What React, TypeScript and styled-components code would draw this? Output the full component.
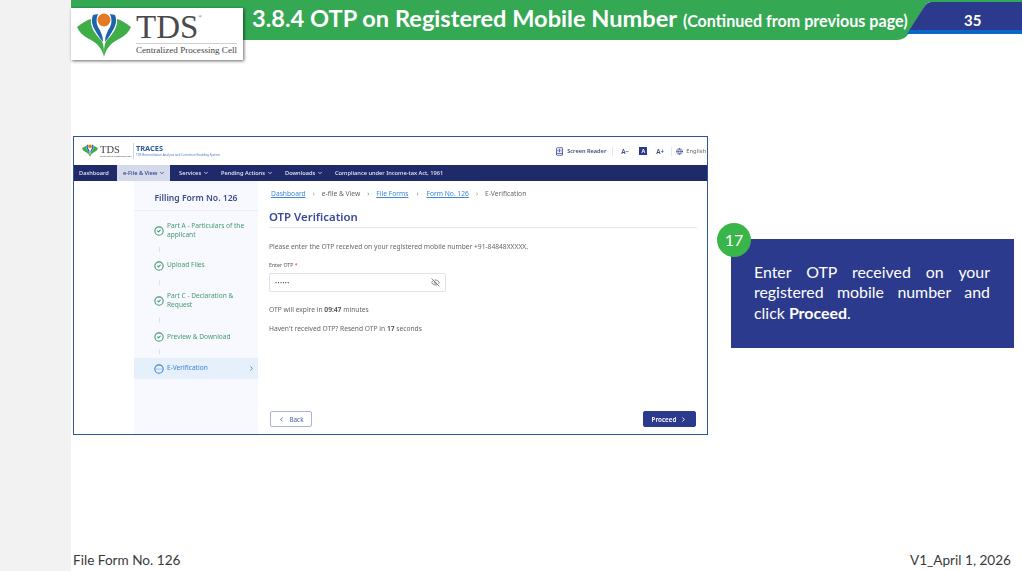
import styled, { createGlobalStyle } from 'styled-components';
import {
  BookAudio,
  ChevronDown,
  ChevronLeft,
  ChevronRight,
  CircleCheck,
  CircleEllipsis,
  EyeOff,
  Globe,
} from 'lucide-react';

const GlobalStyle = createGlobalStyle`
  * { box-sizing: border-box; }
  html, body { margin: 0; padding: 0; background: #fff; }
`;

const Page = styled.div`
  display: flex;
  width: 1022px;
  height: 571px;
  overflow: hidden;
  font-family: Lato, 'Liberation Sans', sans-serif;
`;

const Gutter = styled.div`
  width: 71px;
  flex: none;
  background: #f2f2f2;
`;

const Slide = styled.main`
  flex: 1;
  display: flex;
  flex-direction: column;
  min-width: 0;
`;

const Header = styled.header`
  position: relative;
  height: 40px;
  flex: none;
`;

const TitleBand = styled.div`
  display: flex;
  align-items: baseline;
  gap: 6px;
  height: 40px;
  padding: 3px 0 0 181px;
  background: #34a853;
  color: #fff;
  clip-path: path('M0 0 H951 V2 H860 Q856 2 853 7 L838 33 Q834 40 826 40 H0 Z');
`;

const TitleMain = styled.h1`
  margin: 0;
  font-size: 23.6px;
  font-weight: 700;
  line-height: 30px;
  white-space: nowrap;
`;

const TitleNote = styled.span`
  font-size: 16.1px;
  font-weight: 700;
  white-space: nowrap;
`;

const PageTab = styled.div`
  position: absolute;
  top: 2px;
  right: 0;
  width: 115px;
  height: 32px;
  display: flex;
  align-items: center;
  padding: 4px 0 0 57px;
  background: linear-gradient(#2b3a8c 0 28px, #0b66c8 28px);
  color: #fff;
  font-size: 15px;
  font-weight: 700;
  clip-path: path('M0 32 L17 5 Q20 0 25 0 H115 V32 Z');
`;

const LogoCard = styled.div`
  position: absolute;
  top: 8px;
  left: 0;
  width: 172px;
  height: 52px;
  display: flex;
  background: #fff;
  box-shadow: 1px 1px 3px rgba(0, 0, 0, 0.6);
  padding: 2px 0 0 6px;
`;

const LogoText = styled.div`
  display: flex;
  flex-direction: column;
  margin-left: 5px;
  font-family: 'Liberation Serif', serif;
  color: #444;
`;

const LogoName = styled.div`
  font-size: 33px;
  line-height: 35px;
  height: 33px;
  color: #4a4a4a;
`;

const LogoReg = styled.sup`
  font-size: 5px;
  vertical-align: top;
  line-height: 14px;
`;

const LogoCaption = styled.div`
  border-top: 1px solid #d0d0d0;
  font-size: 9.1px;
  line-height: 13px;
  white-space: nowrap;
`;

const Content = styled.div`
  display: flex;
  align-items: flex-start;
  gap: 23px;
  margin: 96px 0 0 2px;
`;

const ShotFrame = styled.section`
  width: 635px;
  height: 299px;
  flex: none;
  display: flex;
  flex-direction: column;
  border: 1px solid #2f5597;
  background: #fff;
  overflow: hidden;
  font-family: 'Noto Sans', sans-serif;
  color: #666;
  filter: blur(0.3px);
`;

const ShotTop = styled.div`
  height: 28px;
  flex: none;
  display: flex;
  align-items: center;
  padding-left: 8px;
`;

const SmallBrand = styled.div`
  display: flex;
  align-items: center;
  gap: 2px;
  width: 51px;
  height: 16px;
  flex: none;
`;

const SmallBrandText = styled.div`
  font-family: 'Liberation Serif', serif;
  color: #444;
  font-size: 10.5px;
  line-height: 9px;
`;

const SmallBrandCaption = styled.div`
  font-size: 2.5px;
  line-height: 4px;
  color: #444;
  white-space: nowrap;
`;

const Traces = styled.div`
  border-left: 1px solid #cfd6e6;
  height: 16px;
  padding-left: 2px;
  display: flex;
  flex-direction: column;
`;

const TracesName = styled.div`
  font-size: 7.4px;
  line-height: 10px;
  font-weight: 700;
  color: #2c5aa6;
`;

const TracesSub = styled.div`
  font-size: 3px;
  line-height: 5px;
  color: #4a78c0;
  white-space: nowrap;
`;

const Tools = styled.div`
  margin-left: auto;
  display: flex;
  align-items: center;
  font-size: 5.6px;
  font-weight: 600;
  color: #3c4a78;
`;

const ToolText = styled.span<{ $gap?: number }>`
  margin-left: ${(p) => p.$gap ?? 0}px;
  white-space: nowrap;
`;

const SizeText = styled(ToolText)`
  font-size: 6.4px;
`;

const ToolSep = styled.span<{ $gap: number }>`
  width: 1px;
  height: 9px;
  background: #e3e6ee;
  margin-left: ${(p) => p.$gap}px;
`;

const SizeBox = styled.span`
  width: 8px;
  height: 8px;
  margin-left: 10px;
  background: #2b3a8c;
  color: #fff;
  display: flex;
  align-items: center;
  justify-content: center;
`;

const Lang = styled.span`
  margin: 0 1px 0 3px;
  font-size: 5.8px;
  color: #666;
  font-weight: 400;
`;

const Nav = styled.nav`
  height: 16px;
  flex: none;
  display: flex;
  align-items: center;
  background: #1f2a6b;
  color: #e8ebf6;
  font-size: 5.7px;
  font-weight: 500;
`;

const NavItem = styled.div<{ $active?: boolean; $width: number }>`
  width: ${(p) => p.$width}px;
  height: 16px;
  flex: none;
  display: flex;
  align-items: center;
  gap: 2px;
  padding-left: ${(p) => (p.$active ? 6 : 5)}px;
  white-space: nowrap;
  background: ${(p) => (p.$active ? '#d5daeb' : 'transparent')};
  color: ${(p) => (p.$active ? '#2b3a8c' : 'inherit')};
`;

const NavGap = styled.div<{ $width: number }>`
  width: ${(p) => p.$width}px;
  flex: none;
`;

const ShotBody = styled.div`
  flex: 1;
  display: flex;
  min-height: 0;
  padding-left: 60px;
`;

const Sidebar = styled.aside`
  width: 124px;
  flex: none;
  background: #f7f9fe;
  display: flex;
  flex-direction: column;
`;

const SideTitle = styled.div`
  height: 30px;
  flex: none;
  padding-top: 4px;
  display: flex;
  align-items: center;
  justify-content: center;
  border-bottom: 1px solid #eceef4;
  color: #3f4c8a;
  font-size: 8.6px;
  font-weight: 600;
`;

const Steps = styled.div`
  display: flex;
  flex-direction: column;
  padding-top: 11px;
`;

const Step = styled.div<{ $height: number; $current?: boolean }>`
  height: ${(p) => p.$height}px;
  display: flex;
  align-items: center;
  gap: 3px;
  padding: 0 3px 0 20px;
  font-size: 6.6px;
  line-height: 8.6px;
  color: ${(p) => (p.$current ? '#3b82d6' : '#43996e')};
  background: ${(p) => (p.$current ? '#e5f0fb' : 'transparent')};

  & > svg {
    flex: none;
  }
`;

const StepLabel = styled.span`
  flex: 1;
`;

const Link = styled.div<{ $height: number }>`
  height: ${(p) => p.$height}px;
  padding-left: 25px;
  display: flex;
  align-items: center;

  &::before {
    content: '';
    width: 1px;
    height: 5px;
    background: #dde0e8;
  }
`;

const Main = styled.div`
  flex: 1;
  min-width: 0;
  display: flex;
  flex-direction: column;
  padding: 7px 10px 7px 11px;
`;

const Crumbs = styled.div`
  display: flex;
  align-items: center;
  height: 10px;
  padding-left: 2px;
  font-size: 6.7px;
  color: #666;
`;

const CrumbLink = styled.a`
  color: #3f86d8;
  text-decoration: underline;
`;

const CrumbArrow = styled.span<{ $wide?: boolean }>`
  margin: 0 ${(p) => (p.$wide ? 8 : 7)}px;
  color: #888;
`;

const Heading = styled.h2`
  margin: 11px 0 0;
  height: 18px;
  font-size: 11.4px;
  line-height: 16px;
  font-weight: 600;
  color: #3b4a9c;
`;

const Rule = styled.div`
  height: 1px;
  background: #e4e6ec;
`;

const Para = styled.p<{ $top: number }>`
  margin: ${(p) => p.$top}px 0 0;
  font-size: 6.68px;
  line-height: 10px;
  white-space: nowrap;
`;

const Strong = styled.b`
  font-weight: 600;
  color: #444;
`;

const FieldLabel = styled.label`
  display: block;
  margin-top: 9px;
  font-size: 5.2px;
  line-height: 9px;
  color: #555;
`;

const Req = styled.span`
  color: #d8333a;
`;

const Input = styled.div`
  width: 177px;
  height: 19px;
  margin-top: 3px;
  display: flex;
  align-items: center;
  justify-content: space-between;
  padding: 0 5px;
  background: #fff;
  border: 1px solid #e0e2e8;
  border-radius: 2px;
  font-size: 5.5px;
  letter-spacing: 0.4px;
  color: #555;
`;

const Actions = styled.div`
  margin-top: auto;
  display: flex;
  justify-content: space-between;
  padding: 0 1px;
`;

const Button = styled.button<{ $primary?: boolean }>`
  height: 16px;
  width: ${(p) => (p.$primary ? 53 : 42)}px;
  display: flex;
  align-items: center;
  justify-content: center;
  gap: 4px;
  padding: 0;
  border-radius: 2px;
  font-family: 'Noto Sans', sans-serif;
  font-size: 6.3px;
  font-weight: ${(p) => (p.$primary ? 600 : 400)};
  color: ${(p) => (p.$primary ? '#fff' : '#4a5a9c')};
  background: ${(p) => (p.$primary ? '#2b3a8c' : '#fff')};
  border: 1px solid ${(p) => (p.$primary ? '#2b3a8c' : '#a9b3d8')};
`;

const Callout = styled.aside`
  position: relative;
  width: 283px;
  height: 109px;
  flex: none;
  margin-top: 103px;
  padding: 23px 24px 0 23px;
  background: #2b3a8c;
  color: #fff;
  font-size: 15.9px;
  line-height: 20.3px;
  text-align: justify;
`;

const Badge = styled.div`
  position: absolute;
  top: -16px;
  left: -14px;
  width: 34px;
  height: 34px;
  border-radius: 50%;
  background: #39b54a;
  display: flex;
  align-items: center;
  justify-content: center;
  font-size: 16px;
`;

const Footer = styled.footer`
  margin-top: auto;
  height: 21px;
  flex: none;
  display: flex;
  justify-content: space-between;
  padding: 0 11px 0 2px;
  font-size: 13.6px;
  line-height: 20px;
  color: #3a3a3a;
`;

function TdsMark({ width }: { width: number }) {
  return (
    <svg width={width} viewBox="0 0 54 46" style={{ flex: 'none' }}>
      <path
        d="M0 15C5 11 10 8 14 7C13 15 18 22 24 28C27 32 27 38 27 45C25 36 20 31 12 27C6 24 2 20 0 15Z"
        fill="#3fae49"
      />
      <path
        d="M54 15C49 11 44 8 40 7C41 15 36 22 30 28C27 32 27 38 27 45C29 36 34 31 42 27C48 24 52 20 54 15Z"
        fill="#3fae49"
      />
      <path d="M16 3C13 10 16 17 26 30C26 24 24 20 21 15C19 11 19 7 21 2Z" fill="#1c62ad" />
      <path d="M38 3C41 10 38 17 28 30C28 24 30 20 33 15C35 11 35 7 33 2Z" fill="#1c62ad" />
      <circle cx="27" cy="8" r="6.5" fill="#e57a26" />
    </svg>
  );
}

export default function App() {
  return (
    <Page>
      <GlobalStyle />
      <Gutter />
      <Slide>
        <Header>
          <TitleBand>
            <TitleMain>3.8.4 OTP on Registered Mobile Number</TitleMain>
            <TitleNote>(Continued from previous page)</TitleNote>
          </TitleBand>
          <PageTab>35</PageTab>
          <LogoCard>
            <TdsMark width={54} />
            <LogoText>
              <LogoName>
                TDS<LogoReg>®</LogoReg>
              </LogoName>
              <LogoCaption>Centralized Processing Cell</LogoCaption>
            </LogoText>
          </LogoCard>
        </Header>

        <Content>
          <ShotFrame>
            <ShotTop>
              <SmallBrand>
                <TdsMark width={16} />
                <div>
                  <SmallBrandText>TDS</SmallBrandText>
                  <SmallBrandCaption>Centralized Processing Cell</SmallBrandCaption>
                </div>
              </SmallBrand>
              <Traces>
                <TracesName>TRACES</TracesName>
                <TracesSub>TDS Reconciliation Analysis and Correction Enabling System</TracesSub>
              </Traces>
              <Tools>
                <BookAudio size={9} color="#2b3a8c" />
                <ToolText $gap={3}>Screen Reader</ToolText>
                <ToolSep $gap={6} />
                <SizeText $gap={8}>A−</SizeText>
                <SizeBox>A</SizeBox>
                <SizeText $gap={9}>A+</SizeText>
                <ToolSep $gap={7} />
                <ToolText $gap={4}>
                  <Globe size={7} color="#2b3a8c" style={{ verticalAlign: 'middle' }} />
                </ToolText>
                <Lang>English</Lang>
              </Tools>
            </ShotTop>

            <Nav>
              <NavItem $width={43}>Dashboard</NavItem>
              <NavItem $active $width={53}>
                e-File &amp; View <ChevronDown size={6} strokeWidth={3} />
              </NavItem>
              <NavGap $width={4} />
              <NavItem $width={42}>
                Services <ChevronDown size={6} strokeWidth={3} />
              </NavItem>
              <NavItem $width={64}>
                Pending Actions <ChevronDown size={6} strokeWidth={3} />
              </NavItem>
              <NavItem $width={50}>
                Downloads <ChevronDown size={6} strokeWidth={3} />
              </NavItem>
              <NavItem $width={120}>Compliance under Income-tax Act, 1961</NavItem>
            </Nav>

            <ShotBody>
              <Sidebar>
                <SideTitle>Filling Form No. 126</SideTitle>
                <Steps>
                  <Step $height={18}>
                    <CircleCheck size={10} strokeWidth={2.6} />
                    <StepLabel>Part A - Particulars of the applicant</StepLabel>
                  </Step>
                  <Link $height={18} />
                  <Step $height={15}>
                    <CircleCheck size={10} strokeWidth={2.6} />
                    <StepLabel>Upload Files</StepLabel>
                  </Step>
                  <Link $height={19} />
                  <Step $height={18}>
                    <CircleCheck size={10} strokeWidth={2.6} />
                    <StepLabel>Part C - Declaration &amp; Request</StepLabel>
                  </Step>
                  <Link $height={20} />
                  <Step $height={14}>
                    <CircleCheck size={10} strokeWidth={2.6} />
                    <StepLabel>Preview &amp; Download</StepLabel>
                  </Step>
                  <Link $height={14} />
                  <Step $height={21} $current>
                    <CircleEllipsis size={10} strokeWidth={2.6} />
                    <StepLabel>E-Verification</StepLabel>
                    <ChevronRight size={7} strokeWidth={3} />
                  </Step>
                </Steps>
              </Sidebar>

              <Main>
                <Crumbs>
                  <CrumbLink>Dashboard</CrumbLink>
                  <CrumbArrow>›</CrumbArrow>
                  e-file &amp; View
                  <CrumbArrow>›</CrumbArrow>
                  <CrumbLink>File Forms</CrumbLink>
                  <CrumbArrow $wide>›</CrumbArrow>
                  <CrumbLink>Form No. 126</CrumbLink>
                  <CrumbArrow>›</CrumbArrow>
                  E-Verification
                </Crumbs>
                <Heading>OTP Verification</Heading>
                <Rule />
                <Para $top={14}>
                  Please enter the OTP received on your registered mobile number +91-84848XXXXX.
                </Para>
                <FieldLabel>
                  Enter OTP <Req>*</Req>
                </FieldLabel>
                <Input>
                  ••••••
                  <EyeOff size={9} color="#666" />
                </Input>
                <Para $top={13}>
                  OTP will expire in <Strong>09:47</Strong> minutes
                </Para>
                <Para $top={9}>
                  Haven't received OTP? Resend OTP in <Strong>17</Strong> seconds
                </Para>
                <Actions>
                  <Button>
                    <ChevronLeft size={7} strokeWidth={3} /> Back
                  </Button>
                  <Button $primary>
                    Proceed <ChevronRight size={7} strokeWidth={3} />
                  </Button>
                </Actions>
              </Main>
            </ShotBody>
          </ShotFrame>

          <Callout>
            <Badge>17</Badge>
            <span>Enter OTP received on your registered mobile number and</span>{' '}
            <span>click</span> <b>Proceed</b>
            <span>.</span>
          </Callout>
        </Content>

        <Footer>
          <span>File Form No. 126</span>
          <span>V1_April 1, 2026</span>
        </Footer>
      </Slide>
    </Page>
  );
}
